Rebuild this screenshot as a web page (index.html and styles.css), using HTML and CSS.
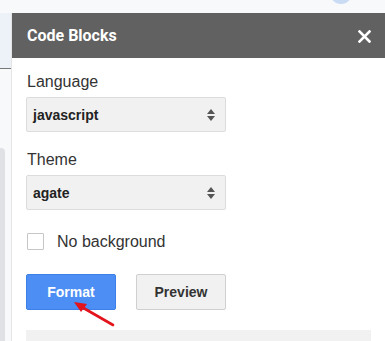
FILE: index.html
```html
<!DOCTYPE html>
<html lang="en">
<head>
    <meta charset="UTF-8">
    <meta name="viewport" content="width=device-width, initial-scale=1.0">
    <title>Code Blocks</title>
    <link rel="stylesheet" href="styles.css">
</head>
<body>
    <div class="page">
        <div class="page-title">Add-ons</div>
        <div class="page-avatar"></div>
        <div class="page-tab"></div>
        <div class="page-rule"></div>
        <div class="page-strip"></div>
    </div>

    <div class="dialog">
        <div class="dialog-header">
            <span class="dialog-title">Code Blocks</span>
            <svg class="close" width="13" height="13" viewBox="0 0 13 13">
                <path d="M1.5 1.5 L11.5 11.5 M11.5 1.5 L1.5 11.5" stroke="#fff" stroke-width="2.6" stroke-linecap="square"/>
            </svg>
        </div>
        <div class="dialog-body">
            <div class="field">
                <label class="field-label">Language</label>
                <div class="select">
                    <span>javascript</span>
                    <svg width="10" height="14" viewBox="0 0 10 14">
                        <path d="M5 1 L9 6 L1 6 Z M1 8 L9 8 L5 13 Z" fill="#555"/>
                    </svg>
                </div>
            </div>
            <div class="field">
                <label class="field-label">Theme</label>
                <div class="select">
                    <span>agate</span>
                    <svg width="10" height="14" viewBox="0 0 10 14">
                        <path d="M5 1 L9 6 L1 6 Z M1 8 L9 8 L5 13 Z" fill="#555"/>
                    </svg>
                </div>
            </div>
            <div class="check-row">
                <span class="checkbox"></span>
                <span class="check-label">No background</span>
            </div>
            <div class="buttons">
                <button class="btn btn-blue">Format</button>
                <button class="btn">Preview</button>
            </div>
            <div class="output"></div>
        </div>
    </div>

    <!-- red annotation arrow -->
    <svg class="pointer" width="60" height="40" viewBox="0 0 60 40">
        <path d="M53 37 L20 18" stroke="#e3141c" stroke-width="2.6" stroke-linecap="round"/>
        <path d="M14 14 L27 16 L21 24 Z" fill="#e3141c"/>
    </svg>
</body>
</html>
```

FILE: styles.css
```css
html {
    overflow: hidden;
}
body {
    margin: 0;
    width: 385px;
    height: 341px;
    overflow: hidden;
    background-color: #f8f9fb;
    font-family: "Liberation Sans", Arial, sans-serif;
    color: #333;
    position: relative;
}
.page-title {
    position: absolute;
    left: -22px;
    top: -15px;
    font-size: 16px;
    color: #333;
}
.page-avatar {
    position: absolute;
    left: 330px;
    top: -18px;
    width: 22px;
    height: 22px;
    border-radius: 50%;
    background-color: #c9dcf3;
}
.page-tab {
    position: absolute;
    left: 0;
    top: 13px;
    width: 76px;
    height: 55px;
    background-color: #edf1f8;
}
.page-rule {
    position: absolute;
    left: 0;
    top: 68px;
    width: 12px;
    height: 1px;
    background-color: #777;
}
.page-strip {
    position: absolute;
    left: -4px;
    top: 148px;
    width: 9px;
    height: 200px;
    border-radius: 4px;
    background-color: #dfe1e5;
}
.dialog {
    position: absolute;
    left: 11px;
    top: 13px;
    width: 374px;
    height: 328px;
    overflow: hidden;
    background-color: #fff;
    border-left: 1px solid #e4e4e4;
}
.dialog-header {
    height: 45px;
    background-color: #616161;
    display: flex;
    align-items: center;
    justify-content: space-between;
    padding: 0 15px 0 15px;
    margin-left: -1px;
}
.dialog-title {
    font-family: Roboto, "Liberation Sans", sans-serif;
    font-weight: bold;
    font-size: 16px;
    color: #fff;
    padding-left: 1px;
}
.close {
    margin-right: 0;
    margin-top: 1px;
}
.dialog-body {
    padding: 15px 0 0 14px;
}
.field {
    margin-bottom: 19px;
}
.field-label {
    display: block;
    font-size: 16px;
    line-height: 18px;
    color: #333;
    margin-bottom: 6px;
    padding-left: 1px;
}
.select {
    width: 200px;
    height: 35px;
    box-sizing: border-box;
    background-color: #f1f1f1;
    border: 1px solid #dcdcdc;
    border-radius: 2px;
    display: flex;
    align-items: center;
    justify-content: space-between;
    padding: 0 9px 0 6px;
    font-weight: bold;
    font-size: 14px;
    color: #222;
}
.check-row {
    display: flex;
    align-items: center;
    margin-top: 23px;
    height: 17px;
}
.checkbox {
    width: 15px;
    height: 15px;
    border: 1px solid #c6c6c6;
    border-radius: 1px;
    margin-left: 1px;
}
.check-label {
    font-size: 16px;
    margin-left: 13px;
    color: #333;
}
.buttons {
    display: flex;
    gap: 20px;
    margin-top: 24px;
}
.btn {
    width: 90px;
    height: 36px;
    border: 1px solid #d0d0d0;
    border-radius: 2px;
    background-color: #f1f1f1;
    font-family: "Liberation Sans", Arial, sans-serif;
    font-weight: bold;
    font-size: 14px;
    color: #333;
    padding: 0;
}
.btn-blue {
    background-color: #4d8ef4;
    border-color: #3d7fe8;
    color: #fff;
}
.output {
    margin-top: 20px;
    width: 345px;
    height: 20px;
    background-color: #f1f1f1;
}
.pointer {
    position: absolute;
    left: 60px;
    top: 288px;
}
```
